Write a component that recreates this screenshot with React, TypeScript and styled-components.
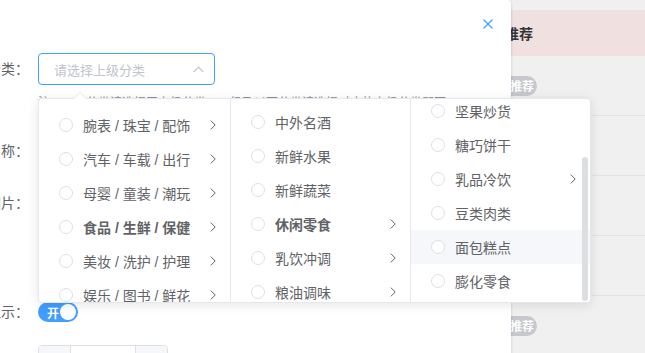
import React from 'react'
import styled, { createGlobalStyle } from 'styled-components'

const GlobalStyle = createGlobalStyle`
  html, body {
    margin: 0;
    padding: 0;
  }
  body {
    font-family: "Liberation Sans", "Noto Sans CJK SC", sans-serif;
  }
  * {
    box-sizing: border-box;
  }
`

const Page = styled.div`
  position: relative;
  width: 645px;
  height: 353px;
  overflow: hidden;
  background: #f0f0f0;
`

/* table behind the dialog */
const Table = styled.div`
  padding-top: 10px;
`
const HeadRow = styled.div`
  display: flex;
  align-items: center;
  height: 46px;
  background: #f0e0df;
`
const Row = styled.div`
  display: flex;
  align-items: center;
  height: 60px;
  border-bottom: 1px solid #e4e4e4;

  &:first-of-type {
    height: 61px;
  }
`
const Spacer = styled.div`
  width: 477px;
  flex: none;
`
const HeadText = styled.span`
  font-size: 14px;
  font-weight: 700;
  color: #333;
`
const TagSwitch = styled.span`
  position: relative;
  display: inline-flex;
  align-items: center;
  justify-content: flex-end;
  width: 60px;
  height: 20px;
  padding-right: 3px;
  border-radius: 10px;
  background: #c6c8cd;
  color: #fff;
  font-size: 12px;
  font-weight: 700;

  &::before {
    content: '';
    position: absolute;
    left: 2px;
    top: 2px;
    width: 16px;
    height: 16px;
    border-radius: 50%;
    background: #fff;
  }
`

/* dialog */
const Dialog = styled.div`
  position: absolute;
  left: -102px;
  top: 0;
  width: 613px;
  height: 390px;
  background: #fff;
  border-radius: 4px;
  box-shadow: 0 1px 3px rgba(0, 0, 0, 0.2);
`
const Header = styled.div`
  display: flex;
  justify-content: flex-end;
  height: 53px;
  padding: 19px 18px 0;
`
const CloseBtn = styled.button`
  display: flex;
  width: 10px;
  height: 10px;
  padding: 0;
  border: none;
  background: none;
  cursor: pointer;
`
const Body = styled.div`
  padding-left: 20px;
`
const FormItem = styled.div<{ $gap: number }>`
  display: flex;
  margin-bottom: ${p => p.$gap}px;
`
const Label = styled.label`
  width: 120px;
  flex: none;
  padding-right: 9px;
  text-align: right;
  line-height: 32px;
  font-size: 14px;
  color: #606266;
  white-space: nowrap;
`
const Control = styled.div`
  position: relative;
  flex: 1;
  min-width: 0;
  display: flex;
  flex-direction: column;
  align-items: flex-start;
  justify-content: center;
  min-height: 32px;
`
const SelectBox = styled.div`
  display: flex;
  align-items: center;
  width: 177px;
  height: 32px;
  padding: 0 10px 0 15px;
  border: 1px solid #409eff;
  border-radius: 4px;
  font-size: 13px;
  color: #c0c4cc;
`
const Placeholder = styled.span`
  flex: 1;
`
const Hint = styled.div`
  margin-top: 8px;
  font-size: 12px;
  line-height: 20px;
  color: #909399;
  white-space: nowrap;
`
const TextInput = styled.div`
  width: 300px;
  height: 32px;
  border: 1px solid #dcdfe6;
  border-radius: 4px;
`
const Upload = styled.div`
  width: 100px;
  height: 100px;
  border: 1px dashed #c0ccda;
  border-radius: 6px;
  background: #fbfdff;
`
const Switch = styled.span`
  position: relative;
  display: inline-flex;
  align-items: center;
  width: 40px;
  height: 20px;
  padding-left: 9px;
  border-radius: 10px;
  background: #409eff;
  color: #fff;
  font-size: 12px;
  font-weight: 700;

  &::after {
    content: '';
    position: absolute;
    right: 2px;
    top: 2px;
    width: 16px;
    height: 16px;
    border-radius: 50%;
    background: #fff;
  }
`
const NumberBox = styled.div`
  display: flex;
  width: 130px;
  height: 32px;
  border: 1px solid #dcdfe6;
  border-radius: 4px;
  overflow: hidden;
`
const Step = styled.span<{ $side: 'left' | 'right' }>`
  display: flex;
  align-items: center;
  justify-content: center;
  width: 32px;
  flex: none;
  background: #f5f7fa;
  color: #606266;
  font-size: 14px;
  border-${p => (p.$side === 'left' ? 'right' : 'left')}: 1px solid #dcdfe6;
`
const NumValue = styled.span`
  flex: 1;
  text-align: center;
  line-height: 30px;
  font-size: 14px;
  color: #606266;
`

/* cascader dropdown */
const Popper = styled.div`
  position: absolute;
  top: 45px;
  left: 0;
  z-index: 10;
  display: flex;
  height: 205px;
  background: #fff;
  border: 1px solid #e4e7ed;
  border-radius: 4px;
  box-shadow: 0 2px 12px rgba(0, 0, 0, 0.1);
`
const Arrow = styled.span`
  position: absolute;
  top: -7px;
  left: 35px;
  width: 0;
  height: 0;
  border: 6px solid transparent;
  border-top-width: 0;
  border-bottom-color: #e4e7ed;

  &::after {
    content: '';
    position: absolute;
    top: 1px;
    left: -6px;
    border: 6px solid transparent;
    border-top-width: 0;
    border-bottom-color: #fff;
  }
`
const Menu = styled.div<{ $w: number }>`
  position: relative;
  width: ${p => p.$w}px;
  height: 100%;
  overflow: hidden;
  border-right: 1px solid #e4e7ed;

  &:last-child {
    border-right: none;
  }
`
const MenuList = styled.ul<{ $scroll: number }>`
  list-style: none;
  margin: 0;
  padding: 6px 0;
  transform: translateY(-${p => p.$scroll}px);
`
const Node = styled.li<{ $active?: boolean; $hover?: boolean }>`
  display: flex;
  align-items: center;
  height: 34px;
  padding: 0 14px 0 20px;
  font-size: 14px;
  color: #606266;
  font-weight: ${p => (p.$active ? 700 : 400)};
  background: ${p => (p.$hover ? '#f5f7fa' : 'transparent')};
`
const Radio = styled.span`
  width: 14px;
  height: 14px;
  flex: none;
  margin-right: 10px;
  border: 1px solid #dcdfe6;
  border-radius: 50%;
  background: #fff;
`
const NodeLabel = styled.span`
  flex: 1;
  white-space: nowrap;
`
const Thumb = styled.span`
  position: absolute;
  right: 2px;
  top: 58px;
  width: 6px;
  height: 144px;
  border-radius: 3px;
  background: #dddee0;
`

const Chevron = () => (
  <svg width="6" height="10" viewBox="0 0 6 10" fill="none">
    <path d="M0.8 0.6 L5.2 5 L0.8 9.4" stroke="#606266" strokeWidth="1" />
  </svg>
)

type NodeData = { label: string; children?: boolean; active?: boolean; hover?: boolean }

const level1: NodeData[] = [
  { label: '手机 / 运营商 / 数码', children: true },
  { label: '腕表 / 珠宝 / 配饰', children: true },
  { label: '汽车 / 车载 / 出行', children: true },
  { label: '母婴 / 童装 / 潮玩', children: true },
  { label: '食品 / 生鲜 / 保健', children: true, active: true },
  { label: '美妆 / 洗护 / 护理', children: true },
  { label: '娱乐 / 图书 / 鲜花', children: true },
  { label: '家电 / 家居 / 厨具', children: true },
]
const level2: NodeData[] = [
  { label: '中外名酒' },
  { label: '新鲜水果' },
  { label: '新鲜蔬菜' },
  { label: '休闲零食', children: true, active: true },
  { label: '乳饮冲调', children: true },
  { label: '粮油调味', children: true },
]
const level3: NodeData[] = [
  { label: '休闲卤味' },
  { label: '蜜饯果干' },
  { label: '坚果炒货' },
  { label: '糖巧饼干' },
  { label: '乳品冷饮', children: true },
  { label: '豆类肉类' },
  { label: '面包糕点', hover: true },
  { label: '膨化零食' },
]

const CascaderMenu: React.FC<{ nodes: NodeData[]; width: number; scroll?: number; bar?: boolean }> = ({
  nodes,
  width,
  scroll = 0,
  bar,
}) => (
  <Menu $w={width}>
    <MenuList $scroll={scroll}>
      {nodes.map(n => (
        <Node key={n.label} $active={n.active} $hover={n.hover}>
          <Radio />
          <NodeLabel>{n.label}</NodeLabel>
          {n.children && <Chevron />}
        </Node>
      ))}
    </MenuList>
    {bar && <Thumb />}
  </Menu>
)

const App: React.FC = () => {
  return (
    <>
      <GlobalStyle />
      <Page>
        <Table>
          <HeadRow>
            <Spacer />
            <HeadText>是否推荐</HeadText>
          </HeadRow>
          <Row>
            <Spacer />
            <TagSwitch>推荐</TagSwitch>
          </Row>
          <Row />
          <Row />
          <Row />
          <Row>
            <Spacer />
            <TagSwitch>推荐</TagSwitch>
          </Row>
        </Table>

        <Dialog>
          <Header>
            <CloseBtn aria-label="关闭">
              <svg width="10" height="10" viewBox="0 0 10 10">
                <path d="M0.5 0.5 L9.5 9.5 M9.5 0.5 L0.5 9.5" stroke="#409eff" strokeWidth="1.2" />
              </svg>
            </CloseBtn>
          </Header>
          <Body>
            <FormItem $gap={22}>
              <Label>上级分类：</Label>
              <Control>
                <SelectBox>
                  <Placeholder>请选择上级分类</Placeholder>
                  <svg width="11" height="7" viewBox="0 0 11 7" fill="none">
                    <path d="M0.6 6.2 L5.5 1.2 L10.4 6.2" stroke="#c0c4cc" strokeWidth="1.2" />
                  </svg>
                </SelectBox>
                <Hint>注：一级分类请选择无上级分类，二级及以下分类请选择对应的上级分类即可</Hint>
                <Popper>
                  <Arrow />
                  <CascaderMenu nodes={level1} width={192} scroll={31} />
                  <CascaderMenu nodes={level2} width={180} />
                  <CascaderMenu nodes={level3} width={179} scroll={79} bar />
                </Popper>
              </Control>
            </FormItem>
            <FormItem $gap={20}>
              <Label>分类名称：</Label>
              <Control>
                <TextInput />
              </Control>
            </FormItem>
            <FormItem $gap={9}>
              <Label>分类图片：</Label>
              <Control>
                <Upload />
              </Control>
            </FormItem>
            <FormItem $gap={17}>
              <Label>是否显示：</Label>
              <Control>
                <Switch>开</Switch>
              </Control>
            </FormItem>
            <FormItem $gap={0}>
              <Label>排序：</Label>
              <Control>
                <NumberBox>
                  <Step $side="left">−</Step>
                  <NumValue>0</NumValue>
                  <Step $side="right">+</Step>
                </NumberBox>
              </Control>
            </FormItem>
          </Body>
        </Dialog>
      </Page>
    </>
  )
}

export default App
